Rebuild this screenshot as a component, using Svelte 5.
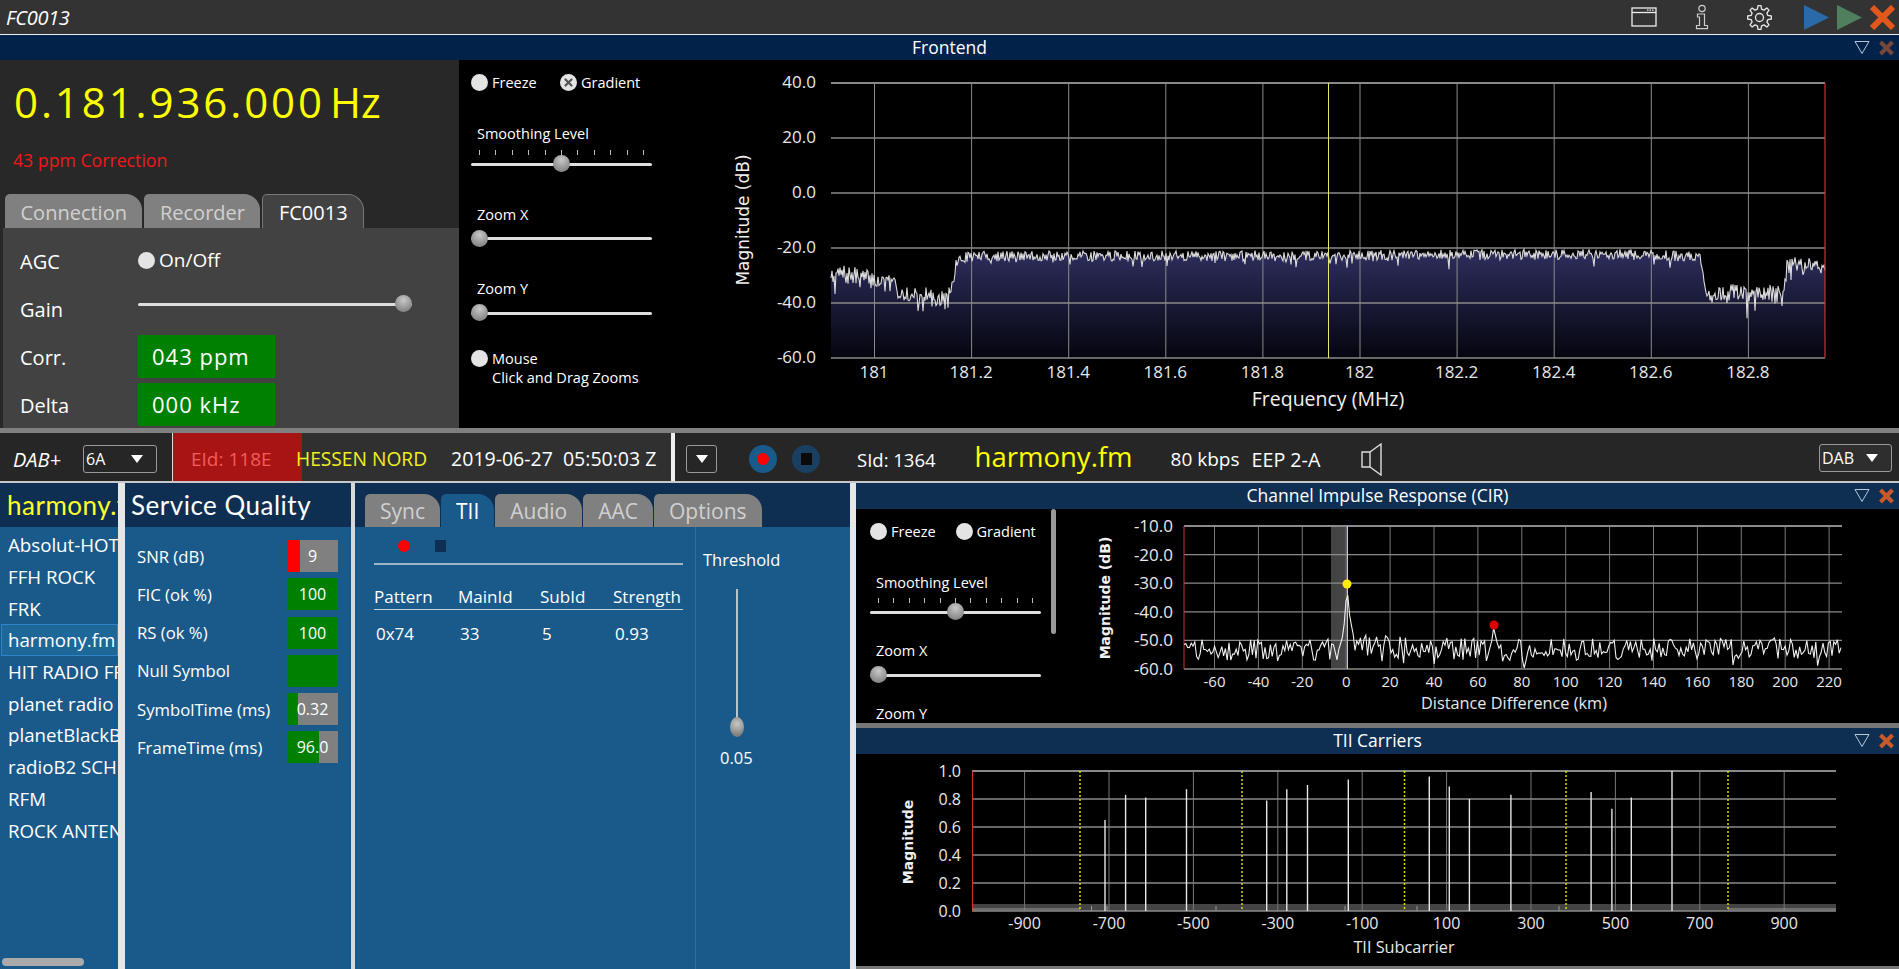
<script lang="ts">
	// seeded so the traces are the same on every load
	function rng(seed: number) {
		let s = seed;
		return () => {
			s = (s * 1664525 + 1013904223) >>> 0;
			return s / 4294967296;
		};
	}

	function lerp(stops: number[][], x: number) {
		for (let i = 1; i < stops.length; i++) {
			if (x <= stops[i][0]) {
				const [x0, y0] = stops[i - 1];
				const [x1, y1] = stops[i];
				return y0 + ((y1 - y0) * (x - x0)) / (x1 - x0);
			}
		}
		return stops[stops.length - 1][1];
	}

	const spectrumStops = [
		[831, -29], [880, -32], [905, -36], [948, -39], [952, -34], [957, -25], [968, -23],
		[1300, -22.8], [1600, -22.2], [1701, -23], [1705, -36.5], [1783, -37], [1787, -26], [1825, -27]
	];

	function buildSpectrum() {
		const r = rng(7);
		const pts = [];
		for (let x = 831; x <= 1825; x += 1) {
			const low = x < 957 || (x > 1702 && x < 1787) || x > 1787;
			let db = lerp(spectrumStops, x) + (r() - 0.5) * (low ? 7 : 3.8);
			if (r() > 0.95) db -= 1.5 + r() * 3;
			if (x === 948 || x === 1747) db -= 6;
			pts.push([x, 83 + (40 - db) * 2.75]);
		}
		return pts;
	}

	const spectrum = buildSpectrum();
	const spectrumLine = spectrum.map((p) => p[0] + ',' + p[1].toFixed(1)).join(' ');
	const spectrumFill = `831,358 ${spectrumLine} 1825,358`;

	const cirStops = [
		[1184, 650], [1338, 650], [1342, 640], [1345, 618], [1347, 584], [1349, 612], [1353, 634],
		[1358, 646], [1489, 650], [1492, 640], [1494, 625], [1496, 640], [1500, 650], [1842, 648]
	];

	function buildCir() {
		const r = rng(21);
		const pts = [];
		for (let x = 1184; x <= 1842; x += 1.8) {
			const peak = (x > 1340 && x < 1354) || (x > 1490 && x < 1498);
			let y = lerp(cirStops, x);
			if (!peak) y += (r() - 0.5) * 22;
			if (!peak && r() > 0.95) y += 9;
			pts.push(x.toFixed(1) + ',' + Math.min(y, 668).toFixed(1));
		}
		return pts.join(' ');
	}
	const cirLine = buildCir();

	const freqTicks = ['181', '181.2', '181.4', '181.6', '181.8', '182', '182.2', '182.4', '182.6', '182.8'];
	const freqDb = ['40.0', '20.0', '0.0', '-20.0', '-40.0', '-60.0'];
	const cirDb = ['-10.0', '-20.0', '-30.0', '-40.0', '-50.0', '-60.0'];
	const cirTicks = [-60, -40, -20, 0, 20, 40, 60, 80, 100, 120, 140, 160, 180, 200, 220];
	const tiiMag = ['1.0', '0.8', '0.6', '0.4', '0.2', '0.0'];
	const tiiTicks = [-900, -700, -500, -300, -100, 100, 300, 500, 700, 900];
	const tiiDotted = [1080, 1242, 1404.5, 1566, 1728];
	const tiiSpikes = [
		[1105, 0.65], [1125.6, 0.83], [1145.7, 0.81], [1186.5, 0.87], [1266.7, 0.79], [1286.8, 0.87],
		[1307.5, 0.9], [1348.3, 0.94], [1429.3, 0.96], [1449.3, 0.89], [1469.4, 0.8], [1510.9, 0.83],
		[1591.1, 0.85], [1611.9, 0.73], [1631.3, 0.81], [1672, 1]
	];
	const tiiSmall = [1091.5, 1107, 1216, 1345, 1417, 1559];

	const services = ['Absolut-HOT', 'FFH ROCK', 'FRK', 'harmony.fm', 'HIT RADIO FFH', 'planet radio', 'planetBlackBeats', 'radioB2 SCHLAGER', 'RFM', 'ROCK ANTENNE'];

	const quality = [
		{ label: 'SNR (dB)', value: '9', pct: 25, color: '#ff0000' },
		{ label: 'FIC (ok %)', value: '100', pct: 100, color: '#008000' },
		{ label: 'RS (ok %)', value: '100', pct: 100, color: '#008000' },
		{ label: 'Null Symbol', value: '', pct: 100, color: '#008000' },
		{ label: 'SymbolTime (ms)', value: '0.32', pct: 21, color: '#008000' },
		{ label: 'FrameTime (ms)', value: '96.0', pct: 63, color: '#008000' }
	];

	const tiiTabs = ['Sync', 'TII', 'Audio', 'AAC', 'Options'];
	const frontTabs = ['Connection', 'Recorder', 'FC0013'];

	// gear outline for the settings button
	function gearPath() {
		const pts = [];
		const teeth = 8;
		for (let i = 0; i < teeth; i++) {
			const a = (i / teeth) * Math.PI * 2;
			const w = Math.PI / teeth;
			for (const [da, rad] of [[-0.62, 8.6], [-0.32, 12], [0.32, 12], [0.62, 8.6]]) {
				const t = a + da * w;
				pts.push(`${(12.5 + rad * Math.cos(t)).toFixed(2)},${(12.5 + rad * Math.sin(t)).toFixed(2)}`);
			}
		}
		return 'M' + pts.join('L') + 'Z';
	}
</script>

{#snippet radio(text: string, checked = false)}
	<span class="radio-item">
		<span class="radio">
			{#if checked}
				<svg width="11" height="11" viewBox="0 0 11 11"><path d="M2.5 2.5l6 6M8.5 2.5l-6 6" stroke="#555" stroke-width="2.2" stroke-linecap="round" /></svg>
			{/if}
		</span>
		{text}
	</span>
{/snippet}

{#snippet slider(value: number, ticks = false)}
	{#if ticks}
		<div class="ticks">
			{#each Array(11) as _}<i></i>{/each}
		</div>
	{/if}
	<div class="slider">
		<div class="track"></div>
		<div class="thumb" style="left: calc((100% - 17px) * {value})"></div>
	</div>
{/snippet}

{#snippet dock(title: string, bright = true)}
	<div class="dock-title" class:frontend={!bright}>
		<span class="dock-name">{title}</span>
		<span class="dock-btns">
			<svg width="16" height="15" viewBox="0 0 16 15"><path d="M1 1.5h14L8 13.5z" fill="none" stroke="#b8c8d8" stroke-width="1" /></svg>
			<svg width="17" height="16" viewBox="0 0 17 16"><path d="M2.5 2l12 12M14.5 2l-12 12" stroke={bright ? '#c8592a' : '#74473a'} stroke-width="4" /></svg>
		</span>
	</div>
{/snippet}

{#snippet combo(text: string)}
	<span class="combo">
		<span>{text}</span>
		<svg width="12" height="8" viewBox="0 0 12 8"><path d="M0 0h12L6 8z" fill="#fff" /></svg>
	</span>
{/snippet}

<div class="app">
	<header class="topbar">
		<span class="app-name">FC0013</span>
		<div class="top-icons">
			<svg class="ic-window" width="26" height="20" viewBox="0 0 26 20" fill="none" stroke="#eee" stroke-width="1.3">
				<rect x="1" y="1" width="24" height="18" />
				<line x1="1" y1="5.5" x2="25" y2="5.5" />
				<line x1="16" y1="3.2" x2="23" y2="3.2" stroke-dasharray="1.5 1" />
			</svg>
			<svg class="ic-info" width="14" height="26" viewBox="0 0 14 26" fill="none" stroke="#ccc" stroke-width="1.2">
				<circle cx="7" cy="4.5" r="3.2" />
				<path d="M2.5 10h7v11.5h3v3.2h-11v-3.2h3v-8.5h-2z" />
			</svg>
			<svg class="ic-gear" width="25" height="25" viewBox="0 0 25 25" fill="none" stroke="#e8e8e8" stroke-width="1.3" stroke-linejoin="round">
				<path d={gearPath()} />
				<circle cx="12.5" cy="12.5" r="4" />
			</svg>
			<svg class="ic-play" width="25" height="25" viewBox="0 0 25 25"><path d="M0 0l25 12.5L0 25z" fill="#2a6aa8" /></svg>
			<svg class="ic-play2" width="25" height="25" viewBox="0 0 25 25"><path d="M0 0l25 12.5L0 25z" fill="#4f7f5c" /></svg>
			<svg class="ic-close" width="25" height="25" viewBox="0 0 25 25"><path d="M2 2l21 21M23 2L2 23" stroke="#e0581c" stroke-width="6" /></svg>
		</div>
	</header>

	{@render dock('Frontend', false)}

	<section class="frontend-body">
		<div class="tuner">
			<div class="freq">0.181.936.000<span class="hz">Hz</span></div>
			<div class="ppm">43 ppm Correction</div>
			<div class="tabs front-tabs">
				{#each frontTabs as t, i}
					<span class="tab" class:dark-active={i === 2}>{t}</span>
				{/each}
			</div>
			<div class="tab-body">
				<span class="row-label">AGC</span>
				<span class="agc">{@render radio('On/Off')}</span>
				<span class="row-label">Gain</span>
				<div class="gain">{@render slider(1)}</div>
				<span class="row-label">Corr.</span>
				<span class="lcd">043 ppm</span>
				<span class="row-label">Delta</span>
				<span class="lcd">000 kHz</span>
			</div>
		</div>

		<div class="controls">
			<div class="radios">
				{@render radio('Freeze')}
				{@render radio('Gradient', true)}
			</div>
			<div class="ctl-label first">Smoothing Level</div>
			{@render slider(0.5, true)}
			<div class="ctl-label">Zoom X</div>
			<div class="ctl-slider">{@render slider(0)}</div>
			<div class="ctl-label">Zoom Y</div>
			<div class="ctl-slider">{@render slider(0)}</div>
			<div class="mouse">{@render radio('Mouse')}</div>
			<div class="mouse-hint">Click and Drag Zooms</div>
		</div>

		<svg class="chart" width="1199" height="368" viewBox="700 60 1199 368">
			<defs>
				<linearGradient id="spec" gradientUnits="userSpaceOnUse" x1="0" y1="250" x2="0" y2="358">
					<stop offset="0" stop-color="#2e2e5e" />
					<stop offset="1" stop-color="#05050f" />
				</linearGradient>
			</defs>
			{#each freqDb as d, i}
				<text class="axis" x="816" y={83 + i * 55 + 5} text-anchor="end">{d}</text>
			{/each}
			{#each freqTicks as t, i}
				<text class="axis" x={874 + i * 97.1} y="378" text-anchor="middle">{t}</text>
			{/each}
			<polygon points={spectrumFill} fill="url(#spec)" />
			{#each freqTicks as _, i}
				<line x1={874.5 + i * 97.1} x2={874.5 + i * 97.1} y1="83" y2="358" stroke="#8a8a8a" />
			{/each}
			{#each freqDb as _, i}
				<line x1="831" x2="1825" y1={83 + i * 55} y2={83 + i * 55} stroke="#8a8a8a" stroke-width={i === 0 ? 2 : 1.3} />
			{/each}
			<polyline points={spectrumLine} fill="none" stroke="#dcdcdc" stroke-width="1.1" />
			<line x1="1328.5" x2="1328.5" y1="83" y2="358" stroke="#e8e86a" />
			<line x1="1825" x2="1825" y1="83" y2="358" stroke="#d03030" stroke-width="1.2" />
			<text class="axis-title" x="1328" y="406" text-anchor="middle">Frequency (MHz)</text>
			<text class="mag" transform="translate(749 220) rotate(-90)" text-anchor="middle">Magnitude (dB)</text>
		</svg>
	</section>

	<div class="splitter"></div>

	<section class="status">
		<span class="dab">DAB+</span>
		<span class="combo-6a">{@render combo('6A')}</span>
		<span class="eid">EId: 118E</span>
		<div class="ens">
			<span class="ens-name">HESSEN NORD</span>
			<span class="ens-time">2019-06-27&nbsp;&nbsp;05:50:03 Z</span>
		</div>
		<div class="status-sep"></div>
		<span class="combo-small">{@render combo('')}</span>
		<span class="round rec"><i></i></span>
		<span class="round stop"><i></i></span>
		<span class="sid">SId: 1364</span>
		<span class="service">harmony.fm</span>
		<span class="rate">80 kbps</span>
		<span class="eep">EEP 2-A</span>
		<svg class="speaker" width="21" height="33" viewBox="0 0 21 33" fill="none" stroke="#ddd" stroke-width="1.4">
			<path d="M1 9h8v15H1z" />
			<path d="M9 9L20 1v31L9 24" />
		</svg>
		<span class="combo-dab">{@render combo('DAB')}</span>
	</section>

	<section class="bottom">
		<div class="services">
			<div class="pane-head"><span class="current">harmony.fm</span></div>
			<ul>
				{#each services as s}
					<li class:selected={s === 'harmony.fm'}>{s}</li>
				{/each}
			</ul>
			<div class="hscroll"></div>
		</div>

		<div class="quality">
			<div class="pane-head"><span class="quality-title">Service Quality</span></div>
			<div class="quality-grid">
				{#each quality as q}
					<span class="q-label">{q.label}</span>
					<div class="bar">
						<div class="bar-fill" style="width: {q.pct}%; background: {q.color}"></div>
						<span class="bar-val">{q.value}</span>
					</div>
				{/each}
			</div>
		</div>

		<div class="tii">
			<div class="pane-head tabs tii-tabs">
				{#each tiiTabs as t}
					<span class="tab" class:active={t === 'TII'}>{t}</span>
				{/each}
			</div>
			<div class="tii-body">
				<div class="tii-main">
					<div class="tii-marks">
						<i class="mark-rec"></i>
						<i class="mark-stop"></i>
					</div>
					<table>
						<colgroup>
							<col class="c1" /><col class="c2" /><col class="c3" /><col />
						</colgroup>
						<thead>
							<tr><th>Pattern</th><th>MainId</th><th>SubId</th><th>Strength</th></tr>
						</thead>
						<tbody>
							<tr><td>0x74</td><td>33</td><td>5</td><td>0.93</td></tr>
						</tbody>
					</table>
				</div>
				<div class="threshold">
					<span class="th-label">Threshold</span>
					<div class="vslider">
						<div class="vthumb"></div>
					</div>
					<span class="th-value">0.05</span>
				</div>
			</div>
		</div>

		<div class="right">
			{@render dock('Channel Impulse Response (CIR)')}
			<div class="cir-body">
				<div class="controls cir-controls">
					<div class="radios">
						{@render radio('Freeze')}
						{@render radio('Gradient')}
					</div>
					<div class="ctl-label first">Smoothing Level</div>
					{@render slider(0.5, true)}
					<div class="ctl-label">Zoom X</div>
					<div class="ctl-slider">{@render slider(0)}</div>
					<div class="ctl-label">Zoom Y</div>
				</div>
				<div class="vscroll"></div>
				<svg class="chart" width="843" height="214" viewBox="1056 509 843 214">
					<rect x="1331" y="526" width="16" height="143" fill="#444" />
					{#each cirTicks as t, i}
						<line x1={1214.5 + i * 43.9} x2={1214.5 + i * 43.9} y1="526" y2="669" stroke="#777" />
						<text class="tick" x={1214.5 + i * 43.9} y="687" text-anchor="middle">{t}</text>
					{/each}
					{#each cirDb as d, i}
						<line x1="1184" x2="1842" y1={526 + i * 28.6} y2={526 + i * 28.6} stroke="#8a8a8a" stroke-width={i === 0 ? 2 : 1.3} />
						<text class="axis" x="1173" y={526 + i * 28.6 + 6} text-anchor="end">{d}</text>
					{/each}
					<line x1="1184" x2="1184" y1="526" y2="669" stroke="#d03030" />
					<line x1="1347.5" x2="1347.5" y1="526" y2="669" stroke="#d8d840" />
					<polyline points={cirLine} fill="none" stroke="#f0f0f0" stroke-width="1.1" />
					<circle cx="1347" cy="584" r="4.5" fill="#ffee00" />
					<circle cx="1494" cy="625" r="4.5" fill="#e00000" />
					<text class="axis-small" x="1514" y="709" text-anchor="middle">Distance Difference (km)</text>
					<text class="mag small" transform="translate(1110 598) rotate(-90)" text-anchor="middle">Magnitude (dB)</text>
				</svg>
			</div>
			<div class="right-split"></div>
			{@render dock('TII Carriers')}
			<div class="tii-chart">
				<svg class="chart" width="1043" height="212" viewBox="856 754 1043 212">
					<rect x="972" y="904" width="864" height="7" fill="#444" />
					{#each tiiTicks as t, i}
						<line x1={1024.6 + i * 84.4} x2={1024.6 + i * 84.4} y1="771" y2="911" stroke="#777" />
						<text class="tick big" x={1024.6 + i * 84.4} y="929" text-anchor="middle">{t}</text>
					{/each}
					{#each tiiMag as m, i}
						<line x1="972" x2="1836" y1={771 + i * 28} y2={771 + i * 28} stroke="#8a8a8a" stroke-width={i === 0 ? 2 : 1.3} />
						<text class="axis tii-axis" x="961" y={771 + i * 28 + 6} text-anchor="end">{m}</text>
					{/each}
					<line x1="972.5" x2="972.5" y1="771" y2="911" stroke="#d03030" />
					<line x1="972" x2="1080" y1="909" y2="909" stroke="#999" />
					<line x1="1728" x2="1836" y1="909" y2="909" stroke="#999" />
					{#each tiiDotted as x}
						<line x1={x} x2={x} y1="771" y2="911" stroke="#e0e000" stroke-width="1.5" stroke-dasharray="2 2" />
					{/each}
					{#each tiiSpikes as [x, v]}
						<line x1={x} x2={x} y1={911 - v * 140} y2="911" stroke="#e8e8e8" stroke-width="1.4" />
					{/each}
					{#each tiiSmall as x}
						<line x1={x} x2={x} y1="906" y2="911" stroke="#999" />
					{/each}
					<text class="axis-small" x="1404" y="953" text-anchor="middle">TII Subcarrier</text>
					<text class="mag tiny" transform="translate(913 842) rotate(-90)" text-anchor="middle">Magnitude</text>
				</svg>
			</div>
			<div class="right-end"></div>
		</div>
	</section>
</div>

<style>
	:global(body) {
		margin: 0;
		background: #000;
	}

	.app {
		width: 1899px;
		height: 969px;
		overflow: hidden;
		display: flex;
		flex-direction: column;
		font-family: "Open Sans", "Noto Sans", sans-serif;
		color: #fff;
	}

	.topbar {
		height: 35px;
		flex: none;
		box-sizing: border-box;
		display: flex;
		align-items: center;
		justify-content: space-between;
		background: #333;
		border-bottom: 1px solid #eee;
	}

	.app-name {
		font-size: 20px;
		font-style: italic;
		margin-left: 6px;
		letter-spacing: -0.3px;
	}

	.top-icons {
		display: flex;
		align-items: center;
		margin-right: 4px;
	}

	.ic-info { margin-left: 38px; }
	.ic-gear { margin-left: 38px; }
	.ic-play { margin-left: 32px; }
	.ic-play2 { margin-left: 8px; }
	.ic-close { margin-left: 8px; }

	.dock-title {
		height: 26px;
		flex: none;
		display: flex;
		align-items: center;
		justify-content: center;
		position: relative;
		background: #0f2f52;
		font-size: 17.5px;
	}

	.dock-title.frontend {
		height: 25px;
		background: #02224a;
	}

	.dock-name {
		line-height: 1;
	}

	.dock-btns {
		position: absolute;
		right: 4px;
		top: 5px;
		display: flex;
		gap: 8px;
	}

	.frontend-body {
		height: 368px;
		flex: none;
		display: flex;
		background: #000;
	}

	.tuner {
		width: 459px;
		flex: none;
		display: flex;
		flex-direction: column;
		background: #282828;
	}

	.freq {
		margin: 14px 0 0 14px;
		font-size: 42px;
		line-height: 56px;
		letter-spacing: 2.9px;
		color: #ffff00;
		white-space: nowrap;
	}

	.hz {
		margin-left: 5px;
		letter-spacing: 0;
	}

	.ppm {
		margin: 17px 0 0 13px;
		font-size: 17.7px;
		line-height: 26px;
		color: #f01818;
	}

	.tabs {
		display: flex;
		align-items: flex-end;
		gap: 2px;
	}

	.front-tabs {
		margin: auto 0 0 5px;
	}

	.tab {
		height: 34px;
		box-sizing: border-box;
		display: flex;
		align-items: center;
		padding: 2px 15.5px 0;
		background: #808080;
		color: #d0d0d0;
		border-radius: 5px 16px 0 0;
		font-size: 20px;
	}

	.tab.dark-active {
		background: #424242;
		color: #fff;
		border: 1px solid #777;
		border-bottom: none;
	}

	.tab.active {
		background: #1a5a8a;
		color: #fff;
	}

	.tab-body {
		height: 200px;
		box-sizing: border-box;
		margin-left: 3px;
		padding: 8px 0 0 17px;
		background: #424242;
		display: grid;
		grid-template-columns: 118px 1fr;
		grid-auto-rows: 48px;
		align-items: center;
	}

	.row-label {
		font-size: 20px;
		padding-top: 3px;
	}

	.agc {
		font-size: 19px;
		margin-top: 2px;
	}

	.gain {
		width: 274px;
		margin-top: -8px;
	}

	.lcd {
		width: 137px;
		height: 43px;
		box-sizing: border-box;
		padding-left: 14px;
		display: flex;
		align-items: center;
		background: #008000;
		font-size: 22px;
		letter-spacing: 1px;
	}

	.controls {
		width: 241px;
		flex: none;
		box-sizing: border-box;
		padding: 13px 48px 0 12px;
		background: #000;
		font-size: 14.5px;
	}

	.radios {
		display: flex;
		height: 18px;
	}

	.radios :global(.radio-item) {
		width: 89px;
	}

	.radio-item {
		display: inline-flex;
		align-items: center;
		gap: 4px;
		white-space: nowrap;
	}

	.radio {
		width: 17px;
		height: 17px;
		flex: none;
		border-radius: 50%;
		background: #e4e4e4;
		display: inline-flex;
		align-items: center;
		justify-content: center;
	}

	.ctl-label {
		height: 20px;
		line-height: 20px;
		margin: 31.5px 0 5px 6px;
	}

	.ctl-label.first {
		margin: 33px 0 6px 6px;
	}

	.ticks {
		height: 5px;
		display: flex;
		justify-content: space-between;
		padding: 0 8px;
	}

	.ticks i {
		width: 1px;
		background: #bbb;
	}

	.slider {
		position: relative;
		height: 18px;
		display: flex;
		align-items: center;
	}

	.track {
		flex: 1;
		height: 3px;
		border-radius: 2px;
		background: #dedede;
	}

	.thumb {
		position: absolute;
		top: 0;
		width: 17px;
		height: 17px;
		border-radius: 50%;
		background: radial-gradient(circle at 50% 30%, #c8c8c8, #8a8a8a 70%);
	}

	.mouse {
		margin-top: 27px;
		height: 18px;
		display: flex;
	}

	.mouse-hint {
		margin: 1px 0 0 21px;
		line-height: 20px;
		white-space: nowrap;
	}

	.chart {
		flex: none;
		display: block;
	}

	.axis {
		font-size: 17px;
		fill: #e8e8e8;
	}

	.tii-axis {
		font-size: 16px;
	}

	.tick {
		font-size: 15px;
		fill: #e8e8e8;
	}

	.tick.big {
		font-size: 16px;
	}

	.axis-title {
		font-size: 19.5px;
		fill: #f0f0f0;
	}

	.axis-small {
		font-size: 16.3px;
		fill: #e8e8e8;
	}

	.mag {
		font-family: "DejaVu Sans", sans-serif;
		font-size: 17px;
		fill: #f0f0f0;
	}

	.mag.small {
		font-size: 14px;
		font-weight: bold;
	}

	.mag.tiny {
		font-size: 14px;
		font-weight: bold;
	}

	.splitter {
		height: 5px;
		flex: none;
		background: #808080;
	}

	.status {
		height: 50px;
		flex: none;
		display: flex;
		align-items: center;
		background: #262626;
		border-bottom: 2px solid #c8c8c8;
		box-sizing: border-box;
		font-size: 18.5px;
	}

	.dab,
	.combo-6a,
	.combo-small,
	.round,
	.sid,
	.rate,
	.eep,
	.speaker {
		margin-top: 4px;
	}

	.dab {
		width: 70px;
		padding-left: 13px;
		box-sizing: border-box;
		font-style: italic;
		font-size: 20px;
	}

	.combo {
		display: inline-flex;
		align-items: center;
		justify-content: space-between;
		box-sizing: border-box;
		height: 28px;
		border: 1px solid #999;
		border-radius: 3px;
		padding: 0 13px 0 2px;
		font-size: 16px;
		background: #262626;
	}

	.combo-6a {
		display: flex;
		margin-left: 13px;
	}

	.combo-6a :global(.combo) {
		width: 74px;
	}

	.eid {
		width: 130px;
		align-self: stretch;
		box-sizing: border-box;
		margin-left: 15px;
		padding: 3px 0 0 18px;
		display: flex;
		align-items: center;
		background: #a81414;
		border-left: 1px solid #ddd;
		color: #f25c5c;
		font-size: 19px;
	}

	.ens {
		flex: none;
		width: 369px;
		align-self: stretch;
		box-sizing: border-box;
		padding-top: 3px;
		display: flex;
		align-items: center;
		background: #303030;
		white-space: nowrap;
	}

	.ens-name {
		margin-left: -6px;
		color: #f0f020;
		font-size: 19.2px;
	}

	.ens-time {
		margin-left: 24px;
		font-size: 19.5px;
	}

	.status-sep {
		width: 4px;
		align-self: stretch;
		flex: none;
		background: #eee;
	}

	.combo-small {
		display: flex;
		margin-left: 11px;
	}

	.combo-small :global(.combo) {
		width: 31px;
		padding: 0 8px;
	}

	.round {
		width: 28px;
		height: 28px;
		flex: none;
		border-radius: 50%;
		display: flex;
		align-items: center;
		justify-content: center;
	}

	.rec {
		margin-left: 32px;
		background: #1a5a8a;
	}

	.rec i {
		width: 12px;
		height: 12px;
		border-radius: 50%;
		background: #ff0000;
	}

	.stop {
		margin-left: 15px;
		background: #1b3f60;
	}

	.stop i {
		width: 11px;
		height: 12px;
		background: #0a0a0a;
	}

	.sid {
		margin-left: 37px;
		white-space: nowrap;
	}

	.service {
		margin-left: 39px;
		font-size: 27.5px;
		line-height: 1;
		color: #ffff00;
	}

	.rate {
		margin-left: 38px;
		font-size: 19px;
	}

	.eep {
		margin-left: 12px;
		font-size: 19.7px;
	}

	.speaker {
		margin-left: 41px;
	}

	.combo-dab {
		display: flex;
		margin: 2px 7px 0 auto;
	}

	.combo-dab :global(.combo) {
		width: 73px;
		background: #2e2e2e;
	}

	.bottom {
		flex: 1;
		min-height: 0;
		display: flex;
	}

	.pane-head {
		height: 44px;
		flex: none;
		background: #0f2f52;
		box-sizing: border-box;
	}

	.services {
		width: 118px;
		flex: none;
		position: relative;
		overflow: hidden;
		background: #1a5a8a;
		border-right: 7px solid #e6e6e6;
	}

	.current {
		display: block;
		padding: 7px 0 0 7px;
		font-family: Lato, sans-serif;
		font-size: 26px;
		line-height: 30px;
		letter-spacing: 0.5px;
		color: #ffff2a;
		white-space: nowrap;
	}

	.services ul {
		list-style: none;
		margin: 2px 0 0;
		padding: 0;
	}

	.services li {
		height: 31.7px;
		box-sizing: border-box;
		padding-left: 8px;
		display: flex;
		align-items: center;
		font-size: 18.7px;
		white-space: nowrap;
	}

	.services li.selected {
		background: #1e6899;
		box-shadow: inset 0 0 0 1px #2c86c8;
		margin-left: 1px;
		padding-left: 7px;
	}

	.hscroll {
		position: absolute;
		left: 2px;
		bottom: 3px;
		width: 82px;
		height: 8px;
		border-radius: 4px;
		background: #aaa;
	}

	.quality {
		width: 226px;
		flex: none;
		background: #1a5a8a;
		border-right: 4px solid #d8d8d8;
	}

	.quality-title {
		display: block;
		padding: 7px 0 0 6px;
		font-family: Lato, sans-serif;
		font-size: 26px;
		line-height: 30px;
		letter-spacing: 0.5px;
		white-space: nowrap;
	}

	.quality-grid {
		display: grid;
		grid-template-columns: 150px 51px;
		grid-auto-rows: 32px;
		row-gap: 6.3px;
		padding: 13px 0 0 12px;
		align-items: center;
	}

	.q-label {
		font-size: 16.7px;
		white-space: nowrap;
	}

	.bar {
		height: 32px;
		display: grid;
		background: #808080;
		font-size: 16px;
	}

	.bar-fill,
	.bar-val {
		grid-area: 1 / 1;
	}

	.bar-val {
		align-self: center;
		text-align: center;
		z-index: 1;
	}

	.tii {
		width: 495px;
		flex: none;
		display: flex;
		flex-direction: column;
		background: #1a5a8a;
	}

	.tii-tabs {
		padding-left: 10px;
		gap: 1px;
	}

	.tii-tabs .tab {
		font-size: 21px;
		padding: 0 15px;
		height: 33px;
	}

	.tii-body {
		flex: 1;
		display: flex;
	}

	.tii-main {
		width: 341px;
		box-sizing: border-box;
		padding: 0 12px 0 19px;
		border-right: 1px solid #2c6e9e;
	}

	.tii-marks {
		height: 34px;
		display: flex;
		align-items: center;
		gap: 25px;
		padding: 2px 0 0 24px;
		border-bottom: 2px solid #9fb4c6;
	}

	.mark-rec {
		width: 12px;
		height: 12px;
		border-radius: 50%;
		background: #ff0000;
	}

	.mark-stop {
		width: 11px;
		height: 12px;
		background: #0f2f52;
	}

	table {
		width: 100%;
		margin-top: 20px;
		border-collapse: collapse;
		table-layout: fixed;
		font-size: 17px;
	}

	.c1 { width: 84px; }
	.c2 { width: 82px; }
	.c3 { width: 73px; }

	th {
		font-weight: normal;
		text-align: left;
		padding: 0 0 1px;
		border-bottom: 1px solid #c8d4de;
		white-space: nowrap;
	}

	td {
		padding: 12px 0 0 2px;
	}

	.threshold {
		flex: 1;
		display: flex;
		flex-direction: column;
		padding: 21px 0 0 7px;
		font-size: 16.5px;
	}

	.th-label {
		line-height: 24px;
	}

	.vslider {
		width: 2px;
		height: 137px;
		margin: 17px 0 0 33px;
		background: #b8c4ce;
		position: relative;
	}

	.vthumb {
		position: absolute;
		left: -6px;
		bottom: -11px;
		width: 14px;
		height: 20px;
		border-radius: 50%;
		background: radial-gradient(circle at 50% 35%, #c8c8c8, #808080 75%);
	}

	.th-value {
		margin: 20px 0 0 17px;
	}

	.right {
		flex: 1;
		min-width: 0;
		display: flex;
		flex-direction: column;
		background: #000;
		border-left: 6px solid #e6e6e6;
	}

	.cir-body {
		height: 214px;
		flex: none;
		display: flex;
		overflow: hidden;
	}

	.cir-controls {
		width: 195px;
		padding: 13px 10px 0 14px;
	}

	.cir-controls .ctl-label {
		margin-top: 20px;
		margin-bottom: 5px;
	}

	.cir-controls .ctl-label.first {
		margin-top: 33px;
	}

	.vscroll {
		width: 5px;
		height: 125px;
		flex: none;
		border-radius: 3px;
		background: #999;
	}

	.right-split {
		height: 5px;
		flex: none;
		background: #777;
	}

	.tii-chart {
		height: 212px;
		flex: none;
	}

	.right-end {
		flex: 1;
		background: #777;
	}
</style>
